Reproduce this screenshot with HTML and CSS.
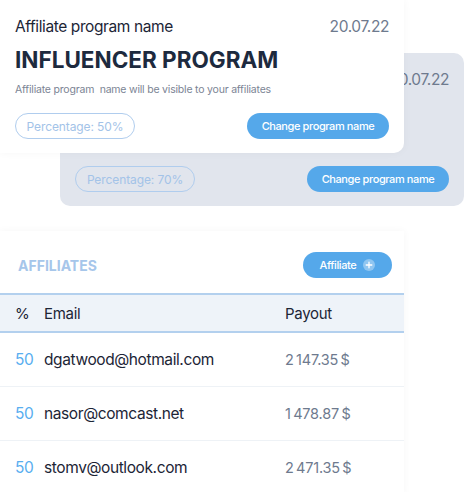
FILE: index.html
```html
<!DOCTYPE html>
<html>
  <head>
    <title>Affiliate programs</title>
    <link rel="stylesheet" href="styles.css">
  </head>
  <body>
    <div class="programs">
      <div class="card card-back">
        <div class="card-head">
          <span class="card-label">Affiliate program name</span>
          <span class="card-date">20.07.22</span>
        </div>
        <h1 class="card-title">INFLUENCER PROGRAM</h1>
        <p class="card-note">Affiliate program&nbsp; name will be visible to your affiliates</p>
        <div class="card-actions">
          <span class="pill">Percentage: 70%</span>
          <button class="btn">Change program name</button>
        </div>
      </div>
      <div class="card card-front">
        <div class="card-head">
          <span class="card-label">Affiliate program name</span>
          <span class="card-date">20.07.22</span>
        </div>
        <h1 class="card-title">INFLUENCER PROGRAM</h1>
        <p class="card-note">Affiliate program&nbsp; name will be visible to your affiliates</p>
        <div class="card-actions">
          <span class="pill">Percentage: 50%</span>
          <button class="btn">Change program name</button>
        </div>
      </div>
    </div>

    <div class="affiliates">
      <div class="affiliates-head">
        <h2>AFFILIATES</h2>
        <button class="btn btn-add">
          Affiliate
          <span class="plus">
            <svg width="12" height="12" viewBox="0 0 12 12">
              <circle cx="6" cy="6" r="6" fill="rgba(255,255,255,0.35)" />
              <path d="M6 3.2v5.6M3.2 6h5.6" stroke="#fff" stroke-width="1.3" stroke-linecap="round" />
            </svg>
          </span>
        </button>
      </div>
      <div class="table">
        <div class="row row-head">
          <span>%</span>
          <span>Email</span>
          <span>Payout</span>
        </div>
        <div class="row">
          <span class="pct">50</span>
          <span class="email">dgatwood@hotmail.com</span>
          <span class="payout">2&thinsp;147.35&thinsp;$</span>
        </div>
        <div class="row">
          <span class="pct">50</span>
          <span class="email">nasor@comcast.net</span>
          <span class="payout">1&thinsp;478.87&thinsp;$</span>
        </div>
        <div class="row">
          <span class="pct">50</span>
          <span class="email">stomv@outlook.com</span>
          <span class="payout">2&thinsp;471.35&thinsp;$</span>
        </div>
      </div>
    </div>
  </body>
</html>
```

FILE: styles.css
```css
body {
  margin: 0;
  font-family: Inter, "Noto Sans", sans-serif;
  background: #ffffff;
  color: #1c2536;
  overflow: hidden;
}
.programs {
  display: grid;
  align-items: start;
}
.card {
  grid-area: 1 / 1;
  width: 404px;
  box-sizing: border-box;
  padding: 17px 15px 14px 15px;
  border-radius: 0 0 10px 0;
  background: #ffffff;
}
.card-back {
  margin: 53px 0 0 60px;
  background: #e1e5ed;
  border-radius: 10px;
}
/* covered by the front card anyway */
.card-back .card-label,
.card-back .card-title,
.card-back .card-note {
  visibility: hidden;
}
.card-front {
  box-shadow: 0 0 8px rgba(0, 0, 0, 0.04);
}
.card-head {
  display: flex;
  justify-content: space-between;
  font-size: 15.5px;
  letter-spacing: -0.4px;
  line-height: 20px;
}
.card-label {
  color: #1c2536;
}
.card-date {
  color: #6e7a8e;
}
.card-title {
  margin: 9px 0 0 0;
  font-size: 22.5px;
  line-height: 28px;
  font-weight: 700;
  color: #1d2a3e;
}
.card-note {
  margin: 9px 0 0 0;
  font-size: 10.5px;
  letter-spacing: -0.2px;
  line-height: 14px;
  color: #7b8494;
}
.card-actions {
  display: flex;
  justify-content: space-between;
  margin-top: 16px;
}
.pill {
  display: inline-flex;
  align-items: center;
  justify-content: center;
  box-sizing: border-box;
  width: 120px;
  height: 26px;
  border: 1.5px solid #b0cdee;
  border-radius: 13px;
  color: #a3c3e8;
  font-size: 12px;
  letter-spacing: -0.1px;
}
.btn {
  display: inline-flex;
  align-items: center;
  justify-content: center;
  width: 142px;
  height: 26px;
  padding: 0;
  border: none;
  border-radius: 13px;
  background: #55a8ea;
  color: #ffffff;
  font-family: inherit;
  font-size: 11px;
  letter-spacing: -0.4px;
  font-weight: 500;
}
.affiliates {
  width: 404px;
  margin-top: 25px;
  box-shadow: 0 0 8px rgba(0, 0, 0, 0.04);
}
.affiliates-head {
  display: flex;
  justify-content: space-between;
  align-items: center;
  padding: 21px 12px 15px 18px;
}
.affiliates-head h2 {
  margin: 0;
  font-size: 14px;
  font-weight: 700;
  color: #a6c6ea;
}
.btn-add {
  width: 89px;
  gap: 7px;
}
.plus {
  display: inline-flex;
}
.table {
  border-top: 2px solid #b3d0ee;
}
.row {
  display: grid;
  grid-template-columns: 29px 241px 1fr;
  align-items: center;
  height: 53px;
  padding-left: 15px;
  border-bottom: 1px solid #eef2f6;
  font-size: 15.5px;
  letter-spacing: -0.4px;
}
.row-head {
  height: 36px;
  background: #eef3f9;
  border-bottom: 2px solid #b3d0ee;
  font-size: 15px;
  letter-spacing: -0.3px;
  color: #1c2536;
}
.pct {
  color: #59aef0;
}
.email {
  color: #1c2536;
}
.payout {
  color: #6e7a8e;
  font-size: 14.5px;
  letter-spacing: -0.2px;
}
```
